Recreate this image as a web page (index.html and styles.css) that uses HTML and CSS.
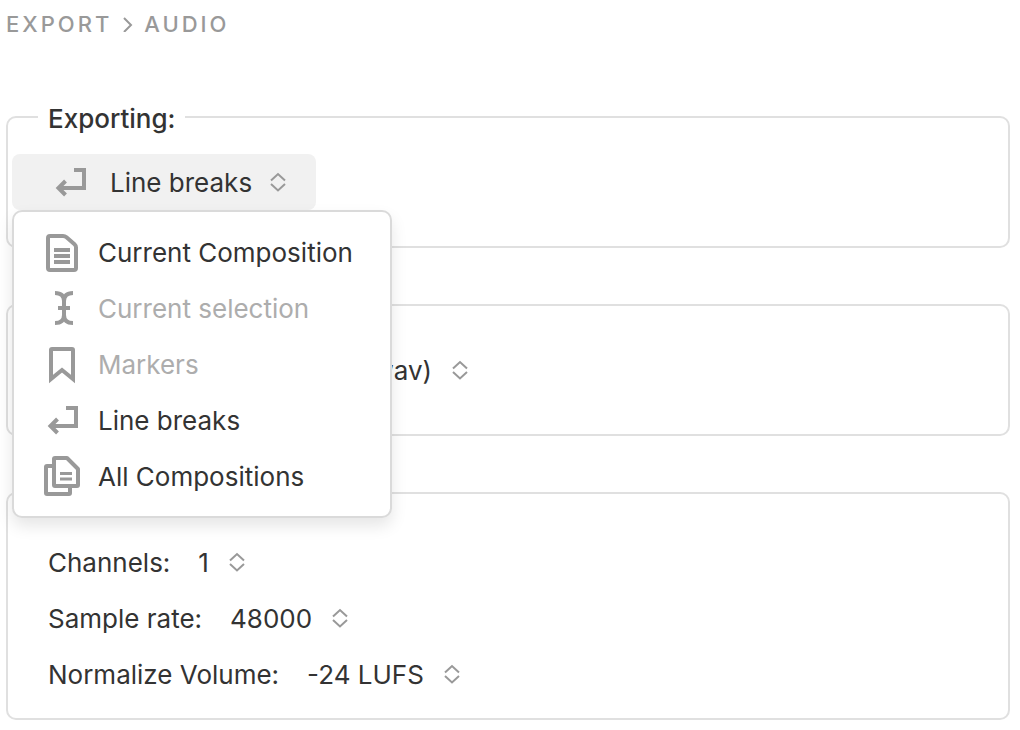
FILE: index.html
```html
<!DOCTYPE html>
<html lang="en">
<head>
  <meta charset="UTF-8">
  <meta name="viewport" content="width=device-width, initial-scale=1.0">
  <title>Export Audio</title>
  <link rel="stylesheet" href="styles.css">
</head>
<body>

<!-- shared icons -->
<svg class="sprite" width="0" height="0" aria-hidden="true">
  <symbol id="icon-return" viewBox="0 0 40 40">
    <path d="M24 8h10v18H9M15.500 19l-7 7 7 7"/>
  </symbol>
  <symbol id="icon-updown" viewBox="0 0 16 20">
    <path d="M1 8.500l7-6.500 7 6.500M1 12l7 6.500 7-6.500"/>
  </symbol>
</svg>

<nav class="breadcrumb" aria-label="Breadcrumb">
  <a href="#export">Export</a>
  <svg class="crumb-arrow" viewBox="0 0 10 16" aria-hidden="true"><path d="M1 2l7 7-7 7"/></svg>
  <a href="#audio">Audio</a>
</nav>

<form class="export-form">
  <fieldset class="group group-target">
    <legend>Exporting:</legend>
    <div class="dropdown">
      <button type="button" class="dropdown-button" aria-haspopup="menu" aria-expanded="true" aria-controls="target-menu">
        <svg class="icon" aria-hidden="true"><use href="#icon-return"/></svg>
        <span class="dropdown-label text">Line breaks</span>
        <svg class="updown" aria-hidden="true"><use href="#icon-updown"/></svg>
      </button>
      <div class="menu" id="target-menu" role="menu">
        <button type="button" role="menuitem" class="menu-item">
          <svg class="icon" viewBox="0 0 40 40" aria-hidden="true">
            <path d="M8 4h13q2 0 3.500 1.200l8 7Q34 13.500 34 15.500V36q0 2-2 2H8q-2 0-2-2V6q0-2 2-2zM12 18h16M12 24h16M12 30h16"/>
          </svg>
          <span class="text">Current Composition</span>
        </button>
        <button type="button" role="menuitem" class="menu-item" disabled>
          <svg class="icon" viewBox="0 0 40 40" aria-hidden="true">
            <path d="M13 5q9 0 9 8v14q0 8-9 8M31 5q-9 0-9 8v14q0 8 9 8M16 20h12"/>
          </svg>
          <span class="text">Current selection</span>
        </button>
        <button type="button" role="menuitem" class="menu-item" disabled>
          <svg class="icon" viewBox="0 0 40 40" aria-hidden="true">
            <path d="M9 35V6q0-1 1-1h20q1 0 1 1v29l-11-9z"/>
          </svg>
          <span class="text">Markers</span>
        </button>
        <button type="button" role="menuitem" class="menu-item">
          <svg class="icon" aria-hidden="true"><use href="#icon-return"/></svg>
          <span class="text">Line breaks</span>
        </button>
        <button type="button" role="menuitem" class="menu-item">
          <svg class="icon" viewBox="0 0 40 40" aria-hidden="true">
            <path stroke-linejoin="round" d="M13 2h12l11 11v16q0 1-1 1H13q-1 0-1-1V3q0-1 1-1zM12 10H5q-1 0-1 1v26q0 1 1 1h22q1 0 1-1v-7"/>
            <path stroke-width="3" d="M18 17.500h12M18 23h12"/>
          </svg>
          <span class="text">All Compositions</span>
        </button>
      </div>
    </div>
  </fieldset>

  <fieldset class="group" aria-label="Format">
    <div class="row">
      <span class="picker">
        <select id="format" class="format-select text" aria-label="File type">
          <option selected>(.wav)</option>
          <option>(.mp3)</option>
        </select>
        <svg class="updown" aria-hidden="true"><use href="#icon-updown"/></svg>
      </span>
    </div>
  </fieldset>

  <fieldset class="group group-settings" aria-label="Settings">
    <div class="row">
      <label class="text" for="channels">Channels:</label>
      <span class="picker">
        <select id="channels" class="text">
          <option selected>1</option>
          <option>2</option>
        </select>
        <svg class="updown" aria-hidden="true"><use href="#icon-updown"/></svg>
      </span>
    </div>
    <div class="row">
      <label class="text" for="rate">Sample rate:</label>
      <span class="picker">
        <select id="rate" class="text">
          <option>44100</option>
          <option selected>48000</option>
        </select>
        <svg class="updown" aria-hidden="true"><use href="#icon-updown"/></svg>
      </span>
    </div>
    <div class="row">
      <label class="text" for="volume">Normalize Volume:</label>
      <span class="picker">
        <select id="volume" class="text">
          <option>-16 LUFS</option>
          <option selected>-24 LUFS</option>
        </select>
        <svg class="updown" aria-hidden="true"><use href="#icon-updown"/></svg>
      </span>
    </div>
  </fieldset>
</form>

</body>
</html>
```
FILE: styles.css
```css
* {
  box-sizing: border-box;
}
body {
  margin: 0;
  padding: 8px 10px 10px 6px;
  background: #fff;
  color: #333;
  font-family: Inter, "Liberation Sans", sans-serif;
  font-size: 26px;
  line-height: 32px;
}
button,
select {
  margin: 0;
  padding: 0;
  border: none;
  background: transparent;
  color: inherit;
  font: inherit;
}
.sprite {
  position: absolute;
}
svg {
  flex: none;
  fill: none;
  stroke: #999;
}
.text {
  padding-top: 2px;
}

/* breadcrumb */
.breadcrumb {
  display: flex;
  align-items: center;
  gap: 11px;
  font-size: 22px;
  font-weight: 500;
  letter-spacing: 3px;
  text-transform: uppercase;
}
.breadcrumb a {
  color: #999;
  text-decoration: none;
}
.crumb-arrow {
  width: 10px;
  height: 16px;
  stroke-width: 2;
}

/* groups */
.export-form {
  display: flex;
  flex-direction: column;
  gap: 56px;
  margin-top: 59px;
}
.group {
  margin: 0;
  min-width: 0;
  border: 2px solid #e0e0e0;
  border-radius: 10px;
  padding: 36px 40px;
}
.group legend {
  padding: 4px 10px 0;
  font-weight: 500;
}
.group-target {
  padding: 19px 4px 36px;
}
.group-target legend {
  margin-left: 26px;
}
.group-settings {
  padding-top: 40px;
  padding-bottom: 16px;
}
.row {
  display: flex;
  align-items: center;
  gap: 28px;
  height: 56px;
}
.picker {
  display: flex;
  align-items: center;
  gap: 20px;
}
.picker select {
  appearance: none;
  field-sizing: content;
}
.picker .format-select {
  width: 384px;
  text-align: right;
  text-align-last: right;
}
.updown {
  width: 16px;
  height: 20px;
  stroke-width: 2;
}
.icon {
  width: 40px;
  height: 40px;
  stroke-width: 4;
}

/* dropdown */
.dropdown {
  position: relative;
  width: max-content;
}
.dropdown-button {
  display: flex;
  align-items: center;
  height: 56px;
  padding: 0 30px 0 38px;
  border-radius: 8px;
  background: #f1f1f1;
}
.dropdown-label {
  margin: 0 18px 0 20px;
}
.menu {
  position: absolute;
  top: 100%;
  left: 0;
  z-index: 1;
  min-width: 380px;
  padding: 12px 0;
  border: 2px solid #dadada;
  border-radius: 10px;
  background: #fff;
  box-shadow: 0 8px 16px rgba(0,0,0,0.1);
}
.menu-item {
  display: flex;
  align-items: center;
  gap: 16px;
  width: 100%;
  height: 56px;
  padding: 0 28px;
  white-space: nowrap;
}
.menu-item:disabled {
  color: #adadad;
}
```
